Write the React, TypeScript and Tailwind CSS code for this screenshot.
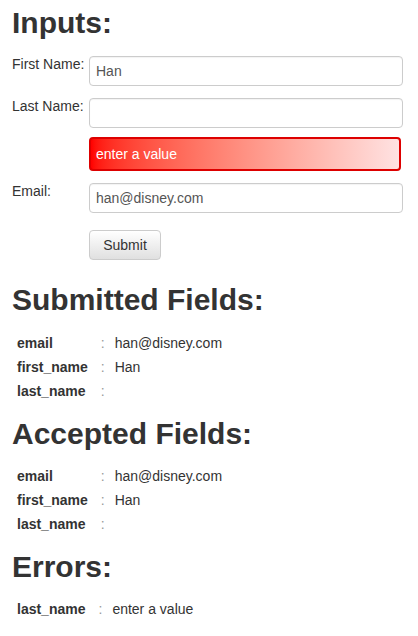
const submitted = [
  { key: 'email', value: 'han@disney.com' },
  { key: 'first_name', value: 'Han' },
  { key: 'last_name', value: '' },
];

const accepted = [
  { key: 'email', value: 'han@disney.com' },
  { key: 'first_name', value: 'Han' },
  { key: 'last_name', value: '' },
];

const errors = [{ key: 'last_name', value: 'enter a value' }];

function Heading({ children, className = '' }: { children: React.ReactNode; className?: string }) {
  return <h2 className={`text-[30px] leading-[33px] font-bold text-[#333] ${className}`}>{children}</h2>;
}

function FieldTable({ rows }: { rows: { key: string; value: string }[] }) {
  return (
    <table className="border-collapse text-[14px] text-[#333]">
      <tbody>
        {rows.map(({ key, value }) => (
          <tr key={key} className="h-[24px]">
            <td className="pl-[5px] pr-[8px] font-bold">{key}</td>
            <td className="px-[5px] text-[#999]">:</td>
            <td className="px-[5px]">{value}</td>
          </tr>
        ))}
      </tbody>
    </table>
  );
}

function Row({ label, children, className = '' }: { label?: string; children: React.ReactNode; className?: string }) {
  return (
    <div className={`flex items-start ${className}`}>
      <label className="w-[77px] shrink-0 text-[14px] leading-[16px] text-[#333]">{label}</label>
      {children}
    </div>
  );
}

function TextInput({ value }: { value: string }) {
  return (
    <input
      readOnly
      value={value}
      className="h-[30px] w-[314px] rounded-[4px] border border-[#ccc] bg-white px-[6px] text-[14px] text-[#555] outline-none shadow-[inset_0_1px_1px_rgba(0,0,0,0.05)]"
    />
  );
}

export default function App() {
  return (
    <div className="min-h-[636px] w-[418px] bg-white px-3 font-['Liberation_Sans',Arial,sans-serif]">
      <Heading className="pt-[6px]">Inputs:</Heading>

      <form className="mt-[17px]" onSubmit={(e) => e.preventDefault()}>
        <Row label="First Name:">
          <TextInput value="Han" />
        </Row>
        <Row label="Last Name:" className="mt-[12px]">
          <TextInput value="" />
        </Row>
        <Row className="mt-[9px]">
          <div className="flex h-[34px] w-[312px] items-center rounded-[4px] border-2 border-[#dd0000] bg-gradient-to-r from-[#ff0000] to-[#ffe2e2] px-[5px] text-[14px] text-white">
            enter a value
          </div>
        </Row>
        <Row label="Email:" className="mt-[12px]">
          <TextInput value="han@disney.com" />
        </Row>
        <Row className="mt-[17px]">
          <button
            type="submit"
            className="h-[30px] w-[72px] rounded-[4px] border border-[#ccc] bg-gradient-to-b from-white to-[#e0e0e0] text-[14px] text-[#333]"
          >
            Submit
          </button>
        </Row>
      </form>

      <Heading className="mt-[23px]">Submitted Fields:</Heading>
      <div className="mt-[15px]">
        <FieldTable rows={submitted} />
      </div>

      <Heading className="mt-[14px]">Accepted Fields:</Heading>
      <div className="mt-[14px]">
        <FieldTable rows={accepted} />
      </div>

      <Heading className="mt-[14px]">Errors:</Heading>
      <div className="mt-[14px]">
        <FieldTable rows={errors} />
      </div>
    </div>
  );
}
